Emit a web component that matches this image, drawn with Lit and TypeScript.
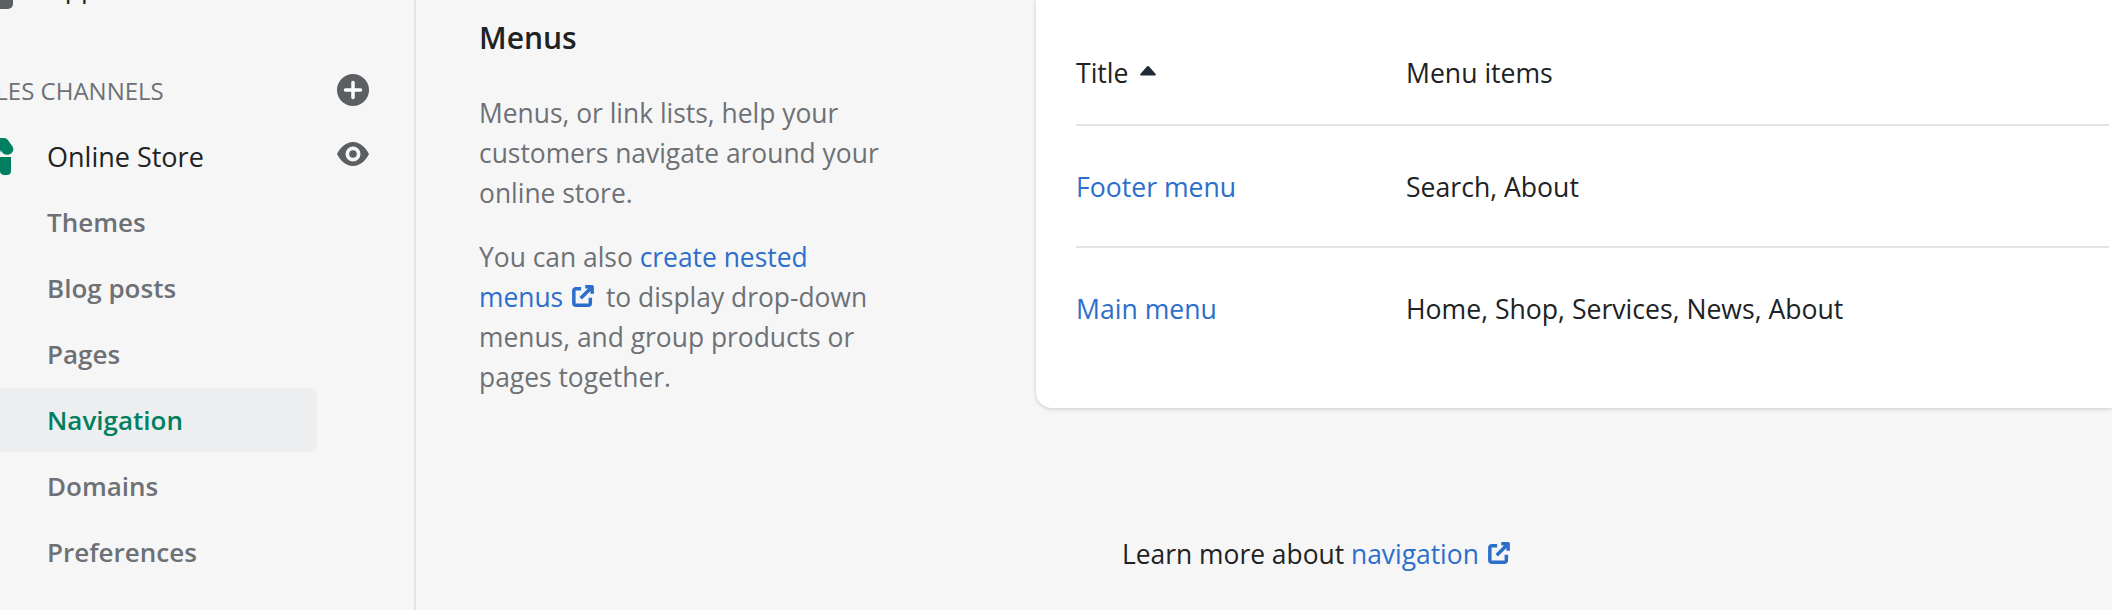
import { LitElement, css, html, svg } from "lit";
import { customElement } from "lit/decorators.js";

const externalIcon = html`<svg class="ext" viewBox="0 0 24 24" fill="none" stroke="#2c6ecb" stroke-width="3.800" stroke-linejoin="round">
  ${svg`<path d="M10 4H4A2 2 0 0 0 2 6V20a2 2 0 0 0 2 2h14a2 2 0 0 0 2-2v-6"/><path d="M9.500 14.500 21 3M14.500 2h7.500v7.500"/>`}
</svg>`;

@customElement("app-root")
export class AppRoot extends LitElement {
  static styles = css`
    :host {
      display: block;
      width: 2112px;
      height: 610px;
      overflow: hidden;
      background: #f6f6f7;
      font-family: "Open Sans", "Noto Sans", sans-serif;
      font-size: 26.6px;
      line-height: 40px;
      color: #202223;
    }
    .page { display: flex; height: 610px; }

    /* sidebar, cut off at the left edge of the shot */
    .sidebar {
      flex: none;
      width: 416px;
      height: 610px;
      box-sizing: border-box;
      border-right: 2px solid #e1e3e5;
      overflow: hidden;
    }
    .sidebar-in { margin-left: -122px; width: 536px; margin-top: -33px; }
    .apps { display: flex; align-items: center; height: 40px; padding-left: 101px; gap: 35px; }
    .apps .box { width: 34px; height: 32px; border-radius: 5px; background: #5c5f62; margin-top: 12px; }
    .channels {
      display: flex; align-items: center; justify-content: space-between;
      margin-top: 63px; height: 40px; padding-left: 89px; padding-right: 45px;
      font-size: 24px; color: #6d7175;
    }
    .channels span { padding-top: 2px; }
    .nav-store {
      display: flex; align-items: center; justify-content: space-between;
      margin-top: 27px; height: 40px; padding-right: 45px; color: #202223;
    }
    .nav-store .left { display: flex; align-items: center; gap: 33px; font-size: 27px; }
    .logo { width: 48px; height: 38px; margin: 0 0 2px 88px; flex: none; }
    .nav-item {
      display: block; width: 439px; height: 64px; line-height: 64px; margin-top: 2px;
      padding-left: 169px; box-sizing: border-box; font-size: 26px; font-weight: 600; color: #6d7175;
      border-radius: 0 8px 8px 0;
    }
    .nav-item.first { margin-top: 13px; }
    .nav-item.active { background: #edeef0; color: #008060; }
    .ico { width: 32px; height: 32px; display: block; }
    .ico.eye { margin-bottom: 6px; }

    /* main column */
    .main { flex: 1; min-width: 0; }
    .layout { display: flex; height: 410px; padding-left: 63px; }
    .intro { width: 405px; flex: none; margin-right: 152px; font-size: 26.400px; color: #6d7175; padding-top: 18px; }
    .intro h2 { margin: 0 0 35px; font-size: 30px; font-weight: 600; line-height: 40px; color: #202223; }
    .intro p { margin: 0 0 24px; }
    a { color: #2c6ecb; text-decoration: none; }
    .ext { width: 22px; height: 22px; vertical-align: 0; margin: 0 5px 0 2px; }
    .card {
      flex: 1; height: 408px; padding: 0 3px 0 40px; box-sizing: border-box;
      background: #fff; border-radius: 0 0 0 16px; box-shadow: 0 1px 4px rgba(0, 0, 0, 0.18);
    }
    .row { display: grid; grid-template-columns: 330px 1fr; height: 122px; padding-top: 41px; box-sizing: border-box; border-bottom: 2px solid #e1e3e5; color: #202223; }
    .row.head { height: 126px; padding-top: 53px; }
    .row:last-child { border-bottom: none; padding-top: 41px; }
    .title { display: flex; align-items: center; gap: 11px; height: 40px; }
    .title svg { margin-bottom: 4px; }
    .footer { padding: 124px 0 0 706px; font-size: 26.400px; }
  `;

  render() {
    const items = ["Themes", "Blog posts", "Pages", "Navigation", "Domains", "Preferences"];
    return html`
      <div class="page">
        <aside class="sidebar">
          <div class="sidebar-in">
            <div class="apps"><div class="box"></div><span>Apps</span></div>
            <div class="channels">
              <span>SALES CHANNELS</span>
              <svg class="ico" viewBox="0 0 32 32"><circle cx="16" cy="16" r="16" fill="#5c5f62"/><path d="M16 8.500v15M8.500 16h15" stroke="#fff" stroke-width="3.500" stroke-linecap="round"/></svg>
            </div>
            <div class="nav-store">
              <div class="left">
                <svg class="logo" viewBox="0 0 48 38"><path fill="#008060" d="M0 1h38a4 4 0 0 1 3.500 1.500l5 7a4 4 0 0 1 .8 3c-.6 4.500-5.800 6.500-9.300 4.500-1.500-.9-2.500-2.500-3-4l-1 3H0zM0 22h10v-1h8v-1h27v14a4 4 0 0 1-4 4h-3.500a4 4 0 0 1-3.500-3v-9h-14v12H0z"/></svg>
                <span>Online Store</span>
              </div>
              <svg class="ico eye" viewBox="0 0 32 32"><path fill="#5c5f62" fill-rule="evenodd" d="M16 4C8 4 2.500 11 0 16c2.500 5 8 12 16 12s13.500-7 16-12C29.500 11 24 4 16 4zm0 4.500a7.500 7.500 0 1 1 0 15 7.500 7.500 0 0 1 0-15z"/><circle cx="16" cy="16" r="3.800" fill="#5c5f62"/></svg>
            </div>
            ${items.map((n, i) => html`<a class="nav-item ${i === 0 ? "first" : ""} ${n === "Navigation" ? "active" : ""}">${n}</a>`)}
          </div>
        </aside>
        <main class="main">
          <div class="layout">
            <section class="intro">
              <h2>Menus</h2>
              <p>Menus, or link lists, help your customers navigate around your online store.</p>
              <p>You can also <a>create nested menus ${externalIcon}</a> to display drop-down menus, and group products or pages together.</p>
            </section>
            <section class="card">
              <div class="row head">
                <div class="title">Title <svg width="16" height="10" viewBox="0 0 16 10"><path fill="#212b36" d="M7 .500a1.400 1.400 0 0 1 2 0l6.500 7.200c.6.700.1 1.800-.8 1.800H1.300C.4 9.500-.1 8.400.5 7.700z"/></svg></div>
                <div>Menu items</div>
              </div>
              <div class="row"><a>Footer menu</a><div>Search, About</div></div>
              <div class="row"><a>Main menu</a><div>Home, Shop, Services, News, About</div></div>
            </section>
          </div>
          <div class="footer">Learn more about <a>navigation ${externalIcon}</a></div>
        </main>
      </div>
    `;
  }
}
